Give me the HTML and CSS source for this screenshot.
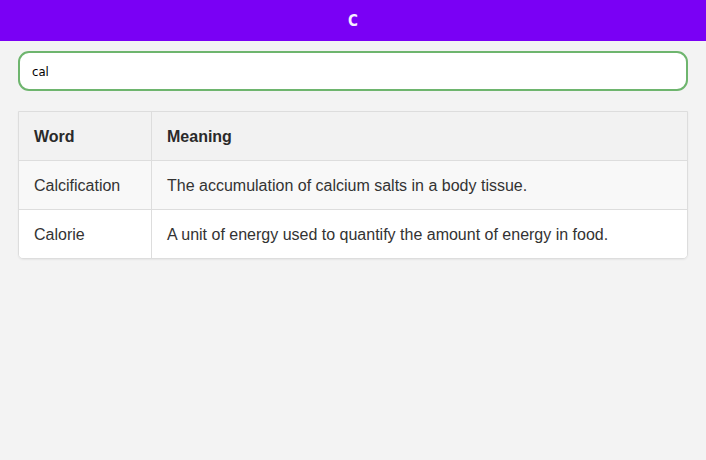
FILE: index.html
```html
<!DOCTYPE html>
<html>
<head>
<meta charset="utf-8">
<link rel="stylesheet" href="styles.css">
</head>
<body>
<header class="topbar"><h1 class="title">C</h1></header>
<main class="content">
  <input class="search" type="text" value="cal">
  <div class="table-wrap">
    <table class="words">
      <thead>
        <tr><th class="col-word">Word</th><th>Meaning</th></tr>
      </thead>
      <tbody>
        <tr class="odd"><td>Calcification</td><td>The accumulation of calcium salts in a body tissue.</td></tr>
        <tr class="even"><td>Calorie</td><td>A unit of energy used to quantify the amount of energy in food.</td></tr>
      </tbody>
    </table>
  </div>
</main>
</body>
</html>
```
FILE: styles.css
```css
html, body {
  margin: 0;
  padding: 0;
  background: #f3f3f3;
}
body {
  font-family: "Liberation Sans", Arial, sans-serif;
}
.topbar {
  background: #7a00f5;
  height: 41px;
  display: flex;
  align-items: center;
  justify-content: center;
}
.title {
  margin: 0;
  color: #f4eefe;
  font-family: "DejaVu Sans Condensed", "DejaVu Sans", sans-serif;
  font-weight: bold;
  font-size: 15px;
}
.content {
  padding: 10px 18px;
  display: flex;
  flex-direction: column;
}
.search {
  box-sizing: border-box;
  height: 40px;
  width: 100%;
  border: 2px solid #6eb56e;
  border-radius: 11px;
  padding: 0 12px;
  font-family: "DejaVu Sans Condensed", "DejaVu Sans", sans-serif;
  font-size: 13px;
  color: #000;
  background: #fff;
  outline: none;
}
.table-wrap {
  margin-top: 20px;
  border: 1px solid #dddddd;
  border-radius: 0 0 5px 5px;
  overflow: hidden;
  box-shadow: 0 1px 2px rgba(0,0,0,0.06);
}
.words {
  width: 100%;
  border-collapse: collapse;
  font-size: 16px;
  color: #333;
}
.words th, .words td {
  text-align: left;
  padding: 2px 15px 0;
  height: 46px;
  border-left: 1px solid #dddddd;
}
.words th:first-child, .words td:first-child {
  border-left: none;
}
.words tbody tr td {
  border-top: 1px solid #dddddd;
}
.col-word {
  width: 102px;
}
.words thead tr {
  background: #f2f2f2;
}
.words th {
  font-weight: bold;
  color: #2a2a2a;
}
.odd { background: #f8f8f8; }
.even { background: #ffffff; }
```
